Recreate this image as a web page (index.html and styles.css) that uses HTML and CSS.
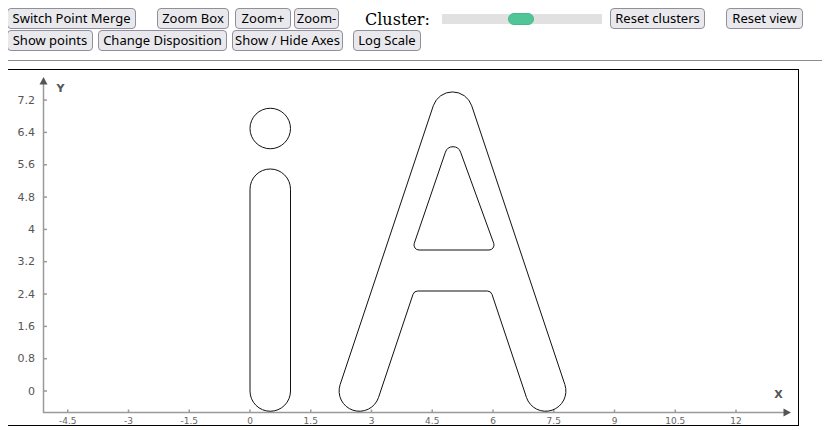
FILE: index.html
```html
<!DOCTYPE html>
<html>
<head>
<meta charset="utf-8">
<link rel="stylesheet" href="styles.css">
</head>
<body>
<div class="toolbar">
  <div class="row">
    <button class="btn w-merge gap-21">Switch Point Merge</button>
    <button class="btn w-zbox gap-6">Zoom Box</button>
    <button class="btn w-zplus gap-3">Zoom+</button>
    <button class="btn w-zminus gap-26">Zoom-</button>
    <span class="cluster-label gap-13">Cluster:</span>
    <div class="slider gap-8"><div class="thumb"></div></div>
    <button class="btn w-rclusters gap-21">Reset clusters</button>
    <button class="btn w-rview">Reset view</button>
  </div>
  <div class="row">
    <button class="btn w-points gap-5">Show points</button>
    <button class="btn w-dispo gap-5">Change Disposition</button>
    <button class="btn w-axes gap-10">Show / Hide Axes</button>
    <button class="btn w-log">Log Scale</button>
  </div>
</div>
<div class="divider"></div>
<div class="plot">
  <svg class="chart" width="790" height="355" viewBox="8 70 790 355" xmlns="http://www.w3.org/2000/svg">
    <g class="axis">
      <line x1="43.5" y1="413" x2="43.5" y2="84"/>
      <line x1="43" y1="412.5" x2="784" y2="412.5"/>
      <polygon class="arrow" points="39.5,84.5 47.5,84.5 43.5,77"/>
      <polygon class="arrow" points="783.5,408.5 783.5,416.5 791,412.5"/>
      <line x1="43.5" y1="391" x2="47" y2="391"/>
      <line x1="43.5" y1="358.7" x2="47" y2="358.7"/>
      <line x1="43.5" y1="326.4" x2="47" y2="326.4"/>
      <line x1="43.5" y1="294" x2="47" y2="294"/>
      <line x1="43.5" y1="261.7" x2="47" y2="261.7"/>
      <line x1="43.5" y1="229.4" x2="47" y2="229.4"/>
      <line x1="43.5" y1="197.1" x2="47" y2="197.1"/>
      <line x1="43.5" y1="164.8" x2="47" y2="164.8"/>
      <line x1="43.5" y1="132.4" x2="47" y2="132.4"/>
      <line x1="43.5" y1="100.1" x2="47" y2="100.1"/>
      <line x1="67.75" y1="409.5" x2="67.75" y2="412.5"/>
      <line x1="128.5" y1="409.5" x2="128.5" y2="412.5"/>
      <line x1="189.25" y1="409.5" x2="189.25" y2="412.5"/>
      <line x1="250" y1="409.5" x2="250" y2="412.5"/>
      <line x1="310.75" y1="409.5" x2="310.75" y2="412.5"/>
      <line x1="371.5" y1="409.5" x2="371.5" y2="412.5"/>
      <line x1="432.25" y1="409.5" x2="432.25" y2="412.5"/>
      <line x1="493" y1="409.5" x2="493" y2="412.5"/>
      <line x1="553.75" y1="409.5" x2="553.75" y2="412.5"/>
      <line x1="614.5" y1="409.5" x2="614.5" y2="412.5"/>
      <line x1="675.25" y1="409.5" x2="675.25" y2="412.5"/>
      <line x1="736" y1="409.5" x2="736" y2="412.5"/>
    </g>
    <g class="ylabels">
      <text x="35" y="391">0</text>
      <text x="35" y="358.7">0.8</text>
      <text x="35" y="326.4">1.6</text>
      <text x="35" y="294">2.4</text>
      <text x="35" y="261.7">3.2</text>
      <text x="35" y="229.4">4</text>
      <text x="35" y="197.1">4.8</text>
      <text x="35" y="164.8">5.6</text>
      <text x="35" y="132.4">6.4</text>
      <text x="35" y="100.1">7.2</text>
    </g>
    <g class="xlabels">
      <text x="67.75" y="421">-4.5</text>
      <text x="128.5" y="421">-3</text>
      <text x="189.25" y="421">-1.5</text>
      <text x="250" y="421">0</text>
      <text x="310.75" y="421">1.5</text>
      <text x="371.5" y="421">3</text>
      <text x="432.25" y="421">4.5</text>
      <text x="493" y="421">6</text>
      <text x="553.75" y="421">7.5</text>
      <text x="614.5" y="421">9</text>
      <text x="675.25" y="421">10.5</text>
      <text x="736" y="421">12</text>
    </g>
    <text class="axis-name" x="60.5" y="88.5">Y</text>
    <text class="axis-name" x="778.5" y="394">X</text>
    <g class="shape">
      <circle cx="270.25" cy="128.5" r="20.25"/>
      <path d="M 250 189.25 A 20.25 20.25 0 0 1 290.5 189.25 L 290.5 391 A 20.25 20.25 0 0 1 250 391 Z"/>
      <path d="M 340.14 384.58 L 433.29 105.78 A 20.25 20.25 0 0 1 471.71 105.78 L 564.86 384.58 A 20.25 20.25 0 0 1 526.44 397.42 L 492.02 294.41 A 5 5 0 0 0 487.28 291 L 417.72 291 A 5 5 0 0 0 412.98 294.41 L 378.56 397.42 A 20.25 20.25 0 0 1 340.14 384.58 Z"/>
      <path d="M 445.43 152.14 L 414.26 243.39 A 5 5 0 0 0 418.99 250 L 489.01 250 A 5 5 0 0 0 493.74 243.39 L 460.57 152.14 A 8 8 0 0 0 445.43 152.14 Z"/>
    </g>
  </svg>
</div>
</body>
</html>
```

FILE: styles.css
```css
html, body {
  margin: 0;
  padding: 0;
  background: #ffffff;
}

body {
  margin: 8px;
  font-family: "DejaVu Serif", serif;
}

.toolbar {
  display: flex;
  flex-direction: column;
  gap: 1px;
  margin-left: -1px;
}

.row {
  display: flex;
  align-items: center;
  height: 21px;
}

.btn {
  box-sizing: border-box;
  height: 21px;
  padding: 0;
  margin: 0;
  border: 1px solid #8f8f9d;
  border-radius: 4px;
  background: #e9e9ed;
  color: #000000;
  font-family: "Noto Sans", sans-serif;
  font-size: 13px;
  line-height: 19px;
  text-align: center;
  white-space: nowrap;
}

.w-merge { width: 129px; }
.w-zbox { width: 72px; }
.w-zplus { width: 56px; }
.w-zminus { width: 45px; }
.w-rclusters { width: 95px; }
.w-rview { width: 77px; }
.w-points { width: 86px; }
.w-dispo { width: 129px; }
.w-axes { width: 111px; }
.w-log { width: 68px; }

.gap-3 { margin-right: 3px; }
.gap-5 { margin-right: 5px; }
.gap-6 { margin-right: 6px; }
.gap-8 { margin-right: 8px; }
.gap-10 { margin-right: 10px; }
.gap-13 { margin-right: 13px; }
.gap-21 { margin-right: 21px; }
.gap-26 { margin-right: 26px; }

.cluster-label {
  font-family: "DejaVu Serif", serif;
  font-size: 16px;
  color: #000000;
  width: 64px;
  white-space: nowrap;
  position: relative;
  top: 1px;
}

.slider {
  position: relative;
  width: 160px;
  height: 10px;
  background: #e1e1e1;
}

.thumb {
  position: absolute;
  left: 66px;
  top: -1px;
  width: 26px;
  height: 12px;
  box-sizing: border-box;
  border-radius: 6px;
  background: #50c598;
  border: 1px solid #48b88c;
}

.divider {
  height: 1px;
  background: #8c8c8c;
  margin: 9px 0 8px 0;
}

.plot {
  width: 790px;
  height: 355px;
  border: 1px solid #000000;
  margin-left: -1px;
}

.chart {
  display: block;
}

.axis line {
  stroke: #9a9a9a;
  stroke-width: 1.5;
}

.axis .arrow {
  fill: #555555;
  stroke: none;
}

.ylabels text {
  font-family: "DejaVu Sans", sans-serif;
  font-size: 11px;
  fill: #555555;
  text-anchor: end;
  dominant-baseline: central;
}

.xlabels text {
  font-family: "DejaVu Sans", sans-serif;
  font-size: 9px;
  fill: #666666;
  text-anchor: middle;
  dominant-baseline: central;
}

.axis-name {
  font-family: "DejaVu Sans", sans-serif;
  font-size: 11px;
  font-weight: bold;
  fill: #555555;
  text-anchor: middle;
  dominant-baseline: central;
}

.shape circle,
.shape path {
  fill: none;
  stroke: #111111;
  stroke-width: 1;
}
```
